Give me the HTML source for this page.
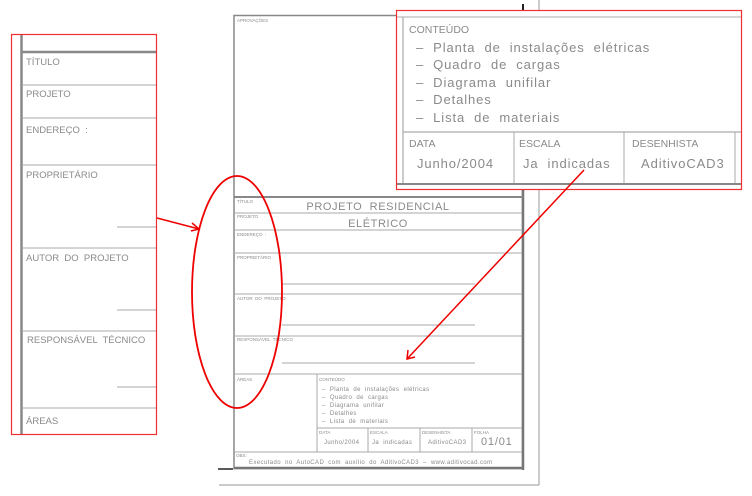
<!DOCTYPE html>
<html><head><meta charset="utf-8">
<style>
html,body{margin:0;padding:0;background:#fff;width:752px;height:496px;overflow:hidden}
svg{display:block}
text{font-family:"Liberation Sans",sans-serif;fill:#8a8a8a;white-space:pre}
</style></head><body>
<svg width="752" height="496" viewBox="0 0 752 496" xmlns="http://www.w3.org/2000/svg" xml:space="preserve">
<g stroke="#9a9a9a" fill="none">
<line x1="21.5" y1="34" x2="21.5" y2="435" stroke-width="2.5" stroke="#888"/>
<line x1="22" y1="52" x2="157" y2="52" stroke-width="2.5" stroke="#888"/>
<line x1="22" y1="85" x2="157" y2="85" stroke="#aaa"/>
<line x1="22" y1="118" x2="157" y2="118" stroke="#aaa"/>
<line x1="22" y1="165" x2="157" y2="165" stroke="#aaa"/>
<line x1="22" y1="248" x2="157" y2="248" stroke="#aaa"/>
<line x1="22" y1="331" x2="157" y2="331" stroke="#aaa"/>
<line x1="22" y1="408" x2="157" y2="408" stroke="#aaa"/>
<line x1="117" y1="227" x2="157" y2="227" stroke="#aaa"/>
<line x1="117" y1="310" x2="157" y2="310" stroke="#aaa"/>
<line x1="117" y1="387" x2="157" y2="387" stroke="#aaa"/>
</g>
<g font-size="9.5">
<text x="26" y="65">TÍTULO</text>
<text x="26" y="97">PROJETO</text>
<text x="26" y="133">ENDEREÇO  :</text>
<text x="26" y="178">PROPRIETÁRIO</text>
<text x="26" y="261">AUTOR  DO  PROJETO</text>
<text x="27" y="343">RESPONSÁVEL  TÉCNICO</text>
<text x="26" y="424">ÁREAS</text>
</g>
<rect x="11.5" y="34.5" width="145" height="400" fill="none" stroke="#f03030" stroke-width="1.2"/>

<g fill="none">
<line x1="539" y1="0" x2="539" y2="485" stroke="#aaa" stroke-width="1.2"/>
<line x1="219" y1="485" x2="539" y2="485" stroke="#aaa" stroke-width="1.2"/>
<line x1="218" y1="469" x2="233" y2="469" stroke="#222" stroke-width="1.5"/>
<line x1="523" y1="4" x2="523" y2="15" stroke="#222" stroke-width="2"/>
<rect x="234" y="15.5" width="288.5" height="453" stroke="#888" stroke-width="1.5"/>
<line x1="523" y1="15" x2="523" y2="470" stroke="#777" stroke-width="2.5"/>
<line x1="234" y1="468" x2="524" y2="468" stroke="#777" stroke-width="2.5"/>
<line x1="234" y1="197" x2="523" y2="197" stroke="#888" stroke-width="2"/>
<g stroke="#aaa" stroke-width="1">
<line x1="234" y1="213" x2="522" y2="213"/>
<line x1="234" y1="230" x2="522" y2="230"/>
<line x1="234" y1="253" x2="522" y2="253"/>
<line x1="234" y1="294" x2="522" y2="294"/>
<line x1="234" y1="336" x2="522" y2="336"/>
<line x1="234" y1="374" x2="522" y2="374"/>
<line x1="234" y1="452" x2="522" y2="452"/>
<line x1="317" y1="428" x2="522" y2="428"/>
<line x1="317" y1="374" x2="317" y2="452"/>
<line x1="368" y1="428" x2="368" y2="452"/>
<line x1="420" y1="428" x2="420" y2="452"/>
<line x1="472" y1="428" x2="472" y2="452"/>
<line x1="282" y1="284" x2="475" y2="284"/>
<line x1="282" y1="325" x2="475" y2="325"/>
<line x1="282" y1="363" x2="475" y2="363"/>
</g>
</g>
<g font-size="4.5">
<text x="237" y="22">APROVAÇÕES</text>
<text x="237" y="203">TÍTULO</text>
<text x="237" y="218">PROJETO</text>
<text x="237" y="236">ENDEREÇO  :</text>
<text x="237" y="259">PROPRIETÁRIO</text>
<text x="237" y="300">AUTOR  DO  PROJETO</text>
<text x="237" y="341">RESPONSÁVEL  TÉCNICO</text>
<text x="237" y="381">ÁREAS</text>
<text x="319" y="381">CONTEÚDO</text>
<text x="319" y="434">DATA</text>
<text x="370" y="434">ESCALA</text>
<text x="422" y="434">DESENHISTA</text>
<text x="474" y="434">FOLHA</text>
<text x="236" y="457">OBS:</text>
</g>
<text x="378" y="210" font-size="11" text-anchor="middle" letter-spacing="0.6">PROJETO  RESIDENCIAL</text>
<text x="378" y="227" font-size="11" text-anchor="middle" letter-spacing="0.6">ELÉTRICO</text>
<g font-size="6" letter-spacing="0.4">
<text x="322" y="391">–  Planta  de  instalações  elétricas</text>
<text x="322" y="399">–  Quadro  de  cargas</text>
<text x="322" y="407">–  Diagrama  unifilar</text>
<text x="322" y="415">–  Detalhes</text>
<text x="322" y="423">–  Lista  de  materiais</text>
<text x="324" y="444">Junho/2004</text>
<text x="372" y="444">Ja  indicadas</text>
<text x="428" y="444">AditivoCAD3</text>
<text x="249" y="464">Executado  no  AutoCAD  com  auxílio  do  AditivoCAD3  –  www.aditivocad.com</text>
</g>
<text x="481" y="445" font-size="11" letter-spacing="0.8">01/01</text>

<rect x="396" y="10" width="346" height="180" fill="#fff"/>
<g fill="none">
<line x1="396" y1="17" x2="742" y2="17" stroke="#aaa" stroke-width="1"/>
<line x1="403" y1="17" x2="403" y2="184" stroke="#aaa" stroke-width="1.2"/>
<line x1="403" y1="132" x2="742" y2="132" stroke="#aaa" stroke-width="1.2"/>
<line x1="514" y1="132" x2="514" y2="184" stroke="#aaa"/>
<line x1="624" y1="132" x2="624" y2="184" stroke="#aaa"/>
<line x1="735" y1="132" x2="735" y2="184" stroke="#aaa"/>
<line x1="396" y1="184" x2="742" y2="184" stroke="#888" stroke-width="2"/>
</g>
<g font-size="10.5">
<text x="409" y="33">CONTEÚDO</text>
<text x="409" y="147">DATA</text>
<text x="519" y="147">ESCALA</text>
<text x="632" y="147">DESENHISTA</text>
</g>
<g font-size="13" letter-spacing="0.9">
<text x="416" y="52">–  Planta  de  instalações  elétricas</text>
<text x="416" y="69">–  Quadro  de  cargas</text>
<text x="416" y="87">–  Diagrama  unifilar</text>
<text x="416" y="104">–  Detalhes</text>
<text x="416" y="122">–  Lista  de  materiais</text>
<text x="417" y="168">Junho/2004</text>
<text x="523" y="168">Ja  indicadas</text>
<text x="641" y="168">AditivoCAD3</text>
</g>
<rect x="396.5" y="10.5" width="345" height="179" fill="none" stroke="#f03030" stroke-width="1.2"/>

<ellipse cx="237" cy="292" rx="45" ry="116" fill="none" stroke="#ee0000" stroke-width="1.8"/>
<g stroke="#ee0000" stroke-width="1.5" fill="none">
<line x1="157" y1="218" x2="199" y2="229"/>
<polyline points="192,223 199,229 191,231"/>
<line x1="584" y1="170" x2="407" y2="359"/>
<polyline points="408,350 407,359 415,357"/>
</g>
</svg>
</body></html>
